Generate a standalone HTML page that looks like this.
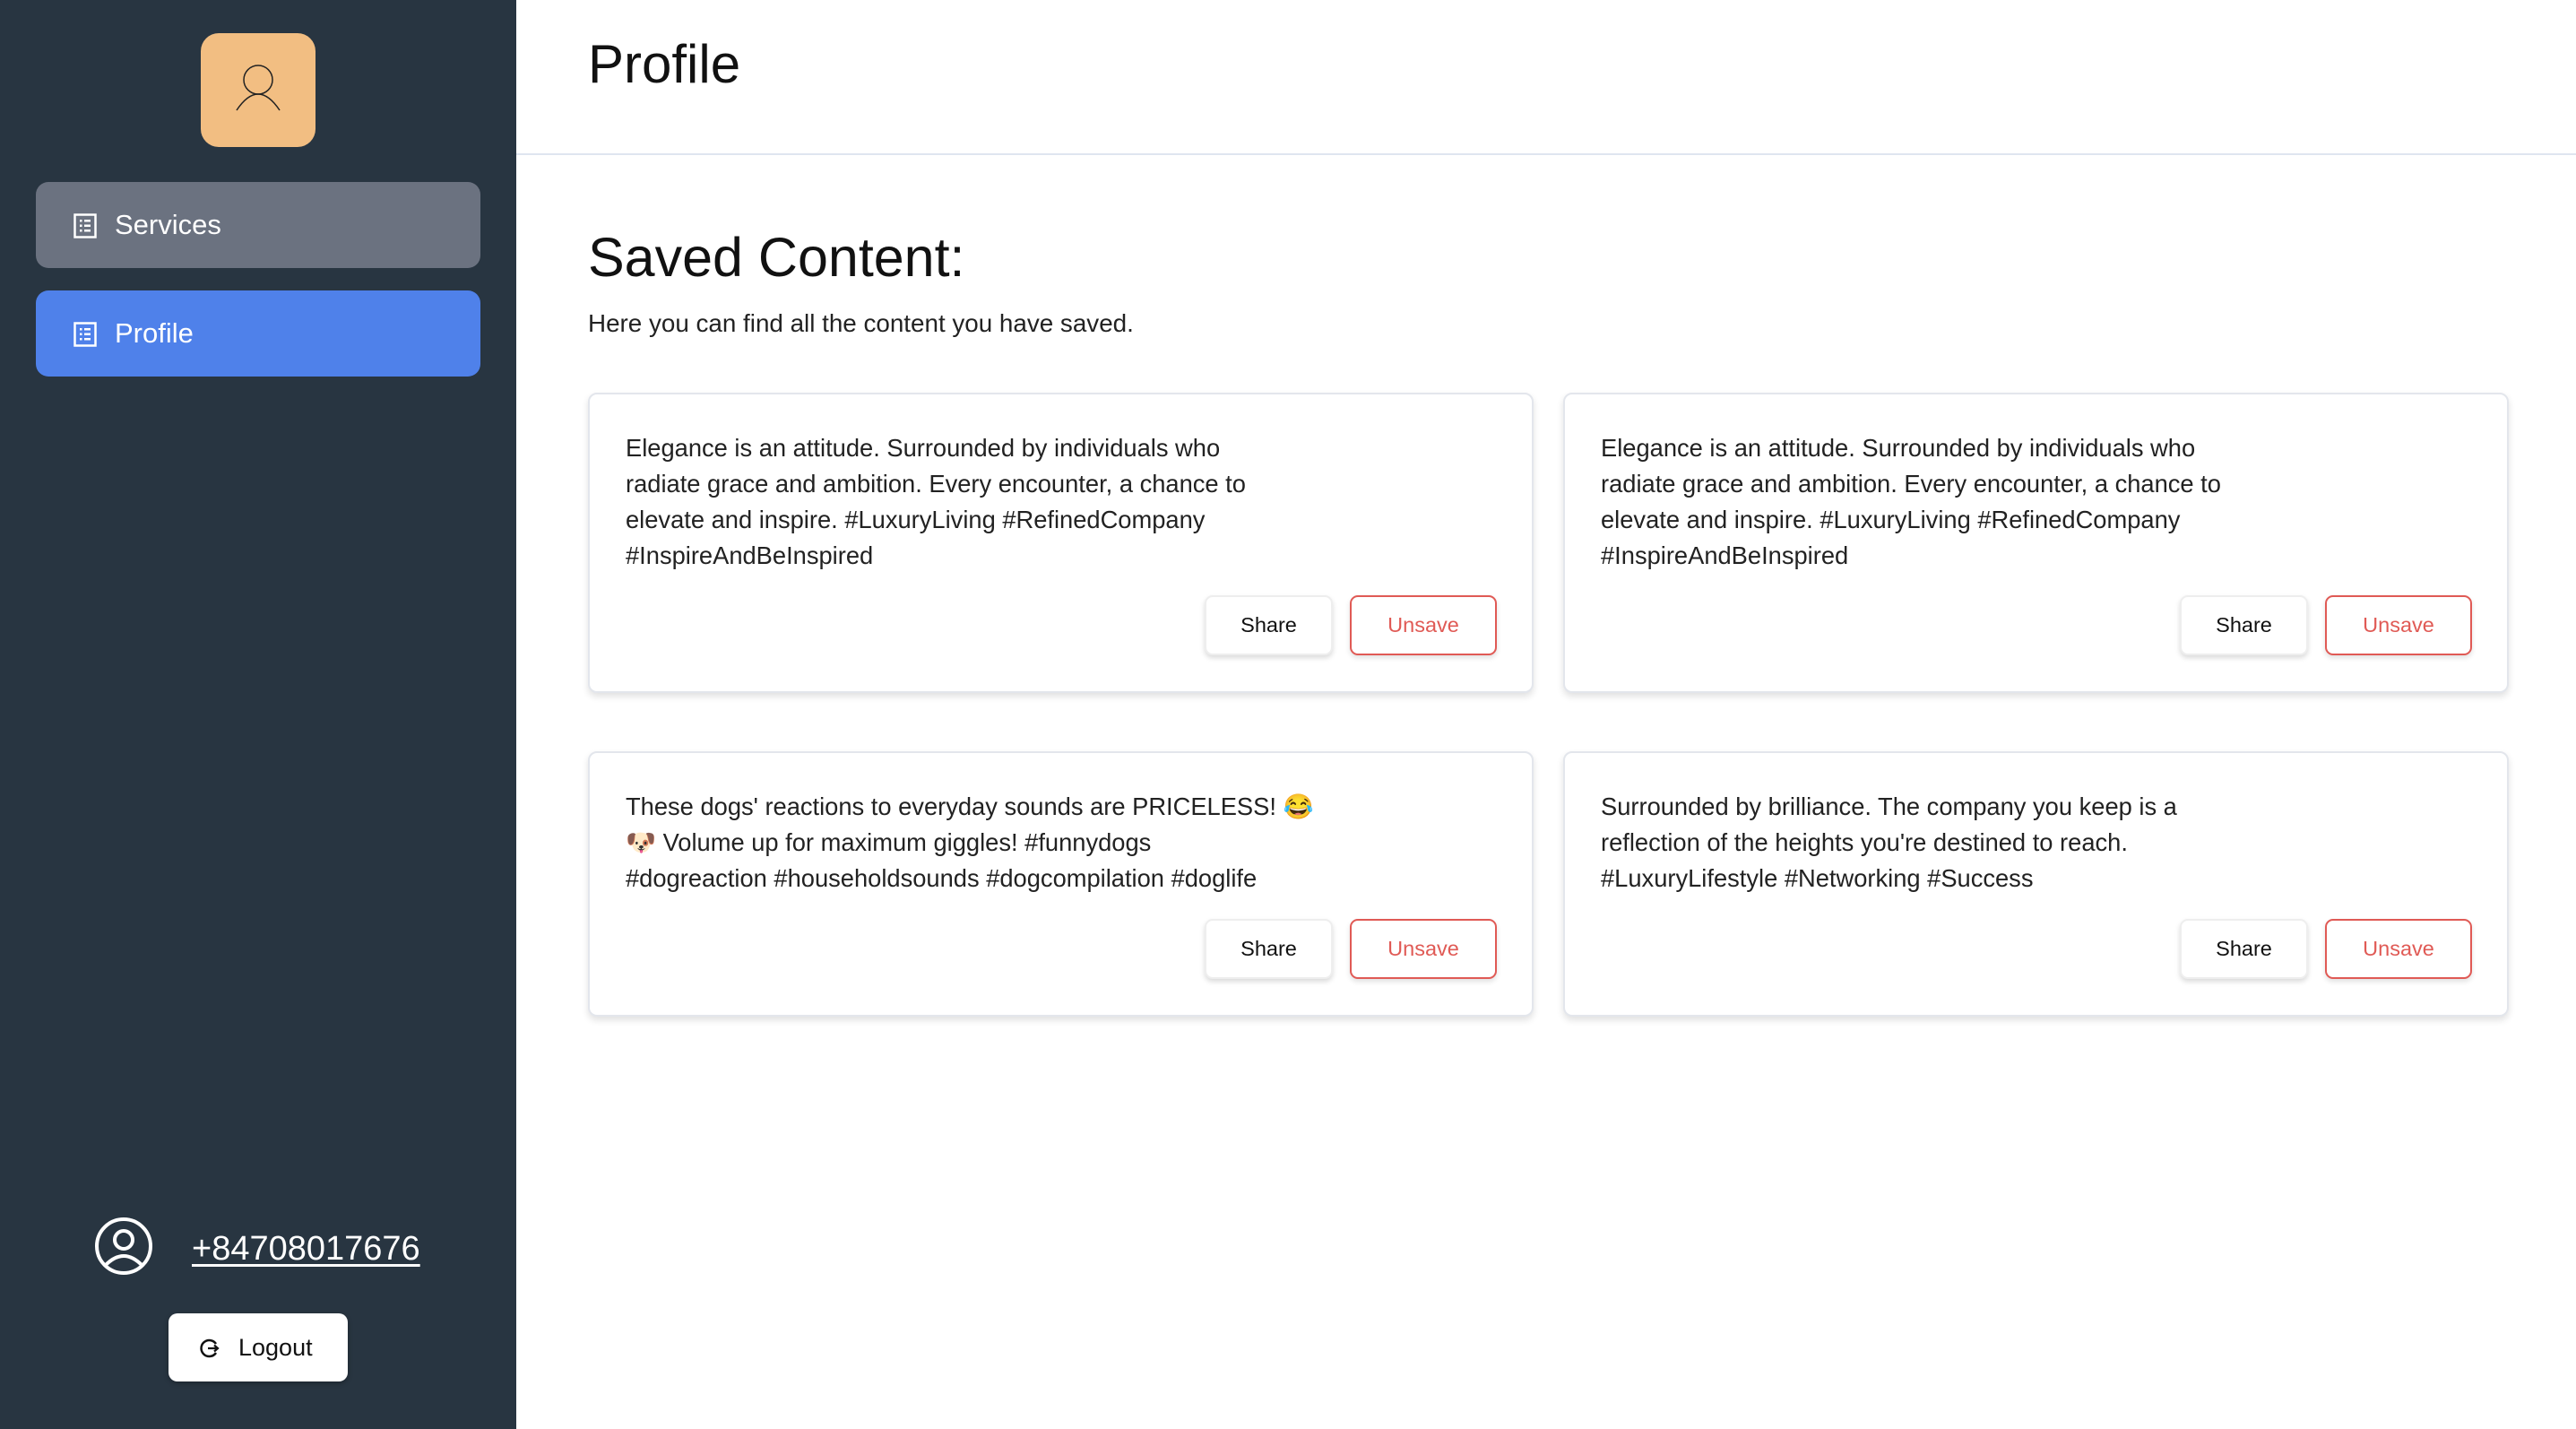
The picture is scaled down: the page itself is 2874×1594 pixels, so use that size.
<!DOCTYPE html>
<html><head><meta charset="utf-8"><style>
*{box-sizing:border-box;margin:0;padding:0}
body{width:2874px;height:1594px;position:relative;background:#fff;font-family:"Liberation Sans",sans-serif;overflow:hidden;color:#1a1a1a}
.side{position:absolute;left:0;top:0;width:576px;height:1594px;background:#283541}
.av{position:absolute;left:224px;top:37px;width:128px;height:127px;background:#F2BE82;border-radius:20px}
.nav{position:absolute;left:40px;width:496px;height:96px;border-radius:14px;color:#fff;font-size:31px;line-height:96px;padding-left:88px}
.nav svg{position:absolute;left:42px;top:35px}
.hdr{position:absolute;top:0;left:576px;right:0;height:173px;border-bottom:2px solid #dfe5f0}
.card{position:absolute;width:1055px;border:2px solid #e3e6ec;border-radius:10px;box-shadow:0 4px 8px rgba(0,0,0,.12);background:#fff}
.txt{position:absolute;left:40px;font-size:27.3px;line-height:40px;white-space:nowrap;color:#222}
.btn{position:absolute;height:67px;border-radius:9px;font-size:23.5px;line-height:63px;text-align:center;background:#fff}
.sh{width:143px;border:2px solid #eee;box-shadow:0 3px 6px rgba(0,0,0,.15);color:#111}
.us{width:164px;border:2px solid #e05a55;color:#e05a55;box-shadow:0 3px 6px rgba(0,0,0,.12)}
</style></head><body>
<div class="side">
 <div class="av"><svg width="128" height="127" viewBox="0 0 128 127"><circle cx="64" cy="52" r="16" fill="none" stroke="#222" stroke-width="1.5"/><path d="M40 86 Q64 50 88 86" fill="none" stroke="#222" stroke-width="1.5"/></svg></div>
 <div class="nav" style="top:203px;background:#6B7280"><svg width="26" height="28" viewBox="0 0 26 28"><rect x="1.5" y="1.5" width="23" height="25" fill="none" stroke="#fff" stroke-width="2.5"/><g fill="#fff"><rect x="7" y="7" width="2.5" height="2.5"/><rect x="12" y="7" width="7" height="2.5"/><rect x="7" y="12.5" width="2.5" height="2.5"/><rect x="12" y="12.5" width="7" height="2.5"/><rect x="7" y="18" width="2.5" height="2.5"/><rect x="12" y="18" width="7" height="2.5"/></g></svg>Services</div>
 <div class="nav" style="top:324px;background:#4F81EA"><svg width="26" height="28" viewBox="0 0 26 28"><rect x="1.5" y="1.5" width="23" height="25" fill="none" stroke="#fff" stroke-width="2.5"/><g fill="#fff"><rect x="7" y="7" width="2.5" height="2.5"/><rect x="12" y="7" width="7" height="2.5"/><rect x="7" y="12.5" width="2.5" height="2.5"/><rect x="12" y="12.5" width="7" height="2.5"/><rect x="7" y="18" width="2.5" height="2.5"/><rect x="12" y="18" width="7" height="2.5"/></g></svg>Profile</div>
 <svg style="position:absolute;left:104px;top:1356px" width="68" height="68" viewBox="0 0 68 68"><circle cx="34" cy="34" r="30" fill="none" stroke="#fff" stroke-width="4"/><circle cx="34" cy="27" r="10" fill="none" stroke="#fff" stroke-width="4"/><path d="M13 56 Q34 34 55 56" fill="none" stroke="#fff" stroke-width="4"/></svg>
 <div style="position:absolute;left:214px;top:1372px;font-size:38px;color:#fff;text-decoration:underline;text-underline-offset:5px">+84708017676</div>
 <div style="position:absolute;left:188px;top:1465px;width:200px;height:76px;background:#fff;border-radius:10px;box-shadow:0 2px 6px rgba(0,0,0,.3);font-size:27px;line-height:76px;padding-left:78px;color:#111"><svg style="position:absolute;left:34px;top:27px" width="24" height="24" viewBox="0 0 24 24"><path d="M19 7 A9 9 0 1 0 19 17" fill="none" stroke="#111" stroke-width="2.5"/><path d="M10 12 H21 M17 8.5 L21 12 L17 15.5" fill="none" stroke="#111" stroke-width="2.2"/></svg>Logout</div>
</div>
<div class="hdr"><div style="position:absolute;left:80px;top:37px;font-size:60px;color:#111">Profile</div></div>
<div style="position:absolute;left:656px;top:252px;font-size:61px;color:#111">Saved Content:</div>
<div style="position:absolute;left:656px;top:345px;font-size:27.8px;color:#222">Here you can find all the content you have saved.</div>

<div class="card" style="left:656px;top:438px;height:335px">
 <div class="txt" style="top:40px">Elegance is an attitude. Surrounded by individuals who<br>radiate grace and ambition. Every encounter, a chance to<br>elevate and inspire. #LuxuryLiving #RefinedCompany<br>#InspireAndBeInspired</div>
 <div class="btn sh" style="left:686px;top:224px">Share</div><div class="btn us" style="left:848px;top:224px">Unsave</div>
</div>
<div class="card" style="left:1744px;top:438px;height:335px">
 <div class="txt" style="top:40px">Elegance is an attitude. Surrounded by individuals who<br>radiate grace and ambition. Every encounter, a chance to<br>elevate and inspire. #LuxuryLiving #RefinedCompany<br>#InspireAndBeInspired</div>
 <div class="btn sh" style="left:686px;top:224px">Share</div><div class="btn us" style="left:848px;top:224px">Unsave</div>
</div>
<div class="card" style="left:656px;top:838px;height:296px">
 <div class="txt" style="top:40px">These dogs' reactions to everyday sounds are PRICELESS! 😂<br>🐶 Volume up for maximum giggles! #funnydogs<br>#dogreaction #householdsounds #dogcompilation #doglife</div>
 <div class="btn sh" style="left:686px;top:185px">Share</div><div class="btn us" style="left:848px;top:185px">Unsave</div>
</div>
<div class="card" style="left:1744px;top:838px;height:296px">
 <div class="txt" style="top:40px">Surrounded by brilliance. The company you keep is a<br>reflection of the heights you're destined to reach.<br>#LuxuryLifestyle #Networking #Success</div>
 <div class="btn sh" style="left:686px;top:185px">Share</div><div class="btn us" style="left:848px;top:185px">Unsave</div>
</div>
</body></html>
